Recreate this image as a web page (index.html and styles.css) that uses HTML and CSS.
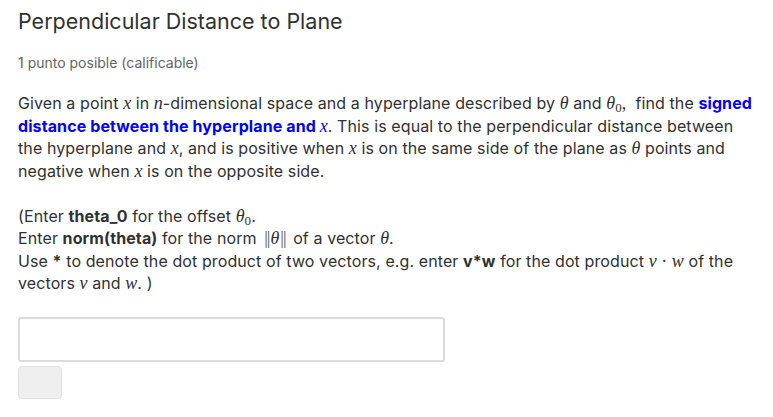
FILE: index.html
```html
<!DOCTYPE html>
<html lang="es">
<head>
<meta charset="utf-8">
<title>Perpendicular Distance to Plane</title>
<link rel="stylesheet" href="styles.css">
</head>
<body>
<div class="problem">
  <h3 class="title">Perpendicular Distance to Plane</h3>
  <div class="points">1 punto posible (calificable)</div>
  <p class="text">Given a point <i class="m">x</i> in <i class="m">n</i>-dimensional space and a hyperplane described by <i class="m">θ</i> and <i class="m">θ</i><sub class="sub">0</sub><span class="m">,</span>&nbsp; find the <b class="blue">signed distance between the hyperplane and <i class="m">x</i></b>. This is equal to the perpendicular distance between the hyperplane and <i class="m">x</i>, and is positive when <i class="m">x</i> is on the same side of the plane as <i class="m">θ</i> points and negative when <i class="m">x</i> is on the opposite side.</p>
  <p class="text">(Enter <b>theta_0</b> for the offset <i class="m">θ</i><sub class="sub">0</sub>.<br>Enter <b>norm(theta)</b> for the norm <span class="m norm"><span class="bar">||</span><i>θ</i><span class="bar">||</span></span> of a vector <i class="m">θ</i>.<br>Use <b>*</b> to denote the dot product of two vectors, e.g. enter <b>v*w</b> for the dot product <i class="m">v</i> <span class="m dot">·</span> <i class="m">w</i> of the vectors <i class="m">v</i> and <i class="m">w</i>. )</p>
  <div class="answer">
    <input class="field" type="text" aria-label="answer">
    <button class="submit" type="button" aria-label="submit"></button>
  </div>
</div>
</body>
</html>
```
FILE: styles.css
```css
html, body { margin: 0; padding: 0; background: #fff; }
.problem {
  padding: 8px 18px 0 18px;
  font-family: Inter, "Noto Sans", sans-serif;
  color: #313131;
}
.title {
  margin: 0;
  font-size: 21.5px;
  line-height: 26px;
  font-weight: 400;
  color: #313131;
}
.points {
  margin-top: 20px;
  font-size: 14px;
  line-height: 17px;
  color: #646464;
}
.text {
  margin: 21px 0 0 0;
  font-size: 16px;
  line-height: 22.5px;
  letter-spacing: 0.1px;
  max-width: 738px;
}
.text + .text { margin-top: 22.5px; }
.m {
  font-family: "Liberation Serif", "DejaVu Serif", serif;
  font-size: 18px;
  font-weight: 400;
  line-height: 1;
  letter-spacing: 0;
}
i.m, .m i { font-style: italic; }
.norm { padding: 0 2px; }
.bar { letter-spacing: -1px; color: #555; padding: 0 1px; }
.sub {
  font-family: "Liberation Serif", serif;
  font-size: 13px;
  line-height: 1;
  vertical-align: -3px;
}
.blue { color: #0000ff; font-weight: 700; }
.blue .m { font-weight: 400; }
.answer {
  margin-top: 22px;
  display: flex;
  flex-direction: column;
  align-items: flex-start;
  gap: 4px;
}
.field {
  box-sizing: border-box;
  width: 427px;
  height: 45px;
  margin: 0;
  border: 2px solid #dcdcdc;
  border-radius: 3px;
  background: #fff;
}
.submit {
  box-sizing: border-box;
  width: 44px;
  height: 33px;
  margin: 0;
  border: 1px solid #e2e2e2;
  border-radius: 4px;
  background: #efefef;
}
```
